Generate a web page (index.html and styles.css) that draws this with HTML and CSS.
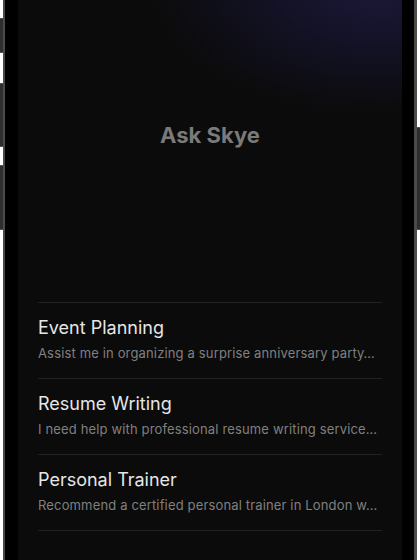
FILE: index.html
```html
<!DOCTYPE html>
<html lang="en">
<head>
    <meta charset="UTF-8">
    <meta name="viewport" content="width=device-width, initial-scale=1.0">
    <title>Ask Skye</title>
    <link rel="stylesheet" href="styles.css">
</head>
<body>
    <div class="device">
        <div class="side-buttons left">
            <span class="side-btn mute"></span>
            <span class="side-btn vol-up"></span>
            <span class="side-btn vol-down"></span>
        </div>
        <div class="frame">
            <div class="screen">
                <h1 class="brand">Ask Skye</h1>
                <ul class="prompts">
                    <li class="prompt">
                        <div class="prompt-title">Event Planning</div>
                        <div class="prompt-text">Assist me in organizing a surprise anniversary party…</div>
                    </li>
                    <li class="prompt">
                        <div class="prompt-title">Resume Writing</div>
                        <div class="prompt-text">I need help with professional resume writing service…</div>
                    </li>
                    <li class="prompt">
                        <div class="prompt-title">Personal Trainer</div>
                        <div class="prompt-text">Recommend a certified personal trainer in London w…</div>
                    </li>
                </ul>
            </div>
        </div>
        <div class="side-buttons right">
            <span class="side-btn power"></span>
        </div>
    </div>
</body>
</html>
```

FILE: styles.css
```css
body {
    margin: 0;
    background-color: #ffffff;
    font-family: Inter, "Noto Sans", sans-serif;
}

.device {
    display: flex;
    width: 420px;
    height: 560px;
    overflow: hidden;
}

.side-buttons {
    display: flex;
    flex-direction: column;
    width: 3px;
}

.side-btn {
    display: block;
    width: 3px;
    background-color: #2e2e2e;
    border-top: 1px solid #555;
    border-bottom: 1px solid #555;
    box-sizing: border-box;
}

.left .mute {
    margin-top: 18px;
    height: 35px;
}

.left .vol-up {
    margin-top: 30px;
    height: 64px;
}

.left .vol-down {
    margin-top: 18px;
    height: 65px;
}

.right .power {
    margin-top: 127px;
    height: 103px;
}

.frame {
    flex: 1;
    background-color: #000;
    border-left: 2px solid #4a4a4a;
    border-right: 3px solid #4a4a4a;
    padding: 0 12px 0 13px;
}

.screen {
    height: 560px;
    background-color: #0b0b0b;
    background-image: radial-gradient(ellipse 230px 130px at 360px -15px, #1b1939 0%, #131226 45%, rgba(11, 11, 11, 0) 100%);
    padding: 122px 20px 0;
    box-sizing: border-box;
}

.brand {
    margin: 0;
    text-align: center;
    font-size: 22px;
    line-height: 27px;
    font-weight: 700;
    color: #7a7a7a;
}

.prompts {
    list-style: none;
    margin: 153px 0 0;
    padding: 0;
}

.prompt {
    border-top: 1px solid #222;
    padding: 14px 0 17px;
}

.prompt:last-child {
    border-bottom: 1px solid #222;
}

.prompt-title {
    font-size: 18px;
    line-height: 22px;
    color: #e6e6e6;
}

.prompt-text {
    margin-top: 6px;
    font-size: 13px;
    line-height: 16px;
    letter-spacing: 0.15px;
    color: #808080;
    white-space: nowrap;
    overflow: hidden;
}
```
